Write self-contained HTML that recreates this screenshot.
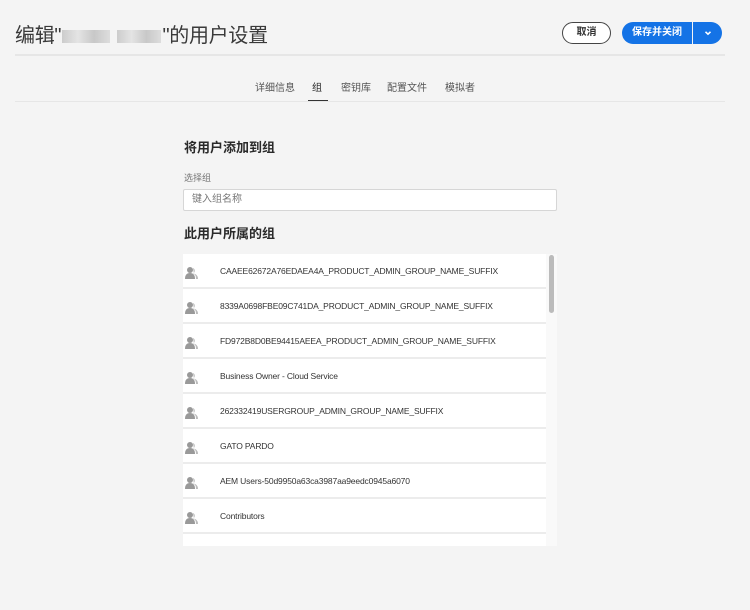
<!DOCTYPE html>
<html><head><meta charset="utf-8"><style>
*{margin:0;padding:0;box-sizing:border-box}
body{width:750px;height:610px;background:#f4f4f4;font-family:"Liberation Sans","Noto Sans CJK SC",sans-serif;position:relative;overflow:hidden;color:#2c2c2c}
.abs{position:absolute}
.title{left:15px;top:19px;font-size:20px;color:#3a3a3a;white-space:nowrap;letter-spacing:-0.3px}
.blur{display:inline-block;height:13px;vertical-align:middle;background:linear-gradient(90deg,#ccc,#e4e4e4,#c8c8c8,#ddd);margin:0 1px}
.hr{left:15px;width:710px;height:2px;background:#e6e6e6}
.btn{top:22px;height:22px;border-radius:11px;font-size:10px;font-weight:bold;text-align:center;line-height:20px}
.tabs span{position:absolute;top:79px;font-size:10px;color:#555}
.row{position:absolute;left:183px;width:363px;height:35px;background:#fff;border-bottom:2px solid #ececec;font-size:8.5px;color:#333;line-height:35px;padding-left:37px;letter-spacing:-0.15px}
.ic{position:absolute;left:2px;top:12px}
</style></head><body>
<div class="abs title">编辑"<span class="blur" style="width:48px"></span> <span class="blur" style="width:44px"></span>"的用户设置</div>
<div class="abs btn" style="left:562px;width:49px;border:1.5px solid #444;color:#333;background:#fff">取消</div>
<div class="abs btn" style="left:622px;width:70px;background:#1473e6;color:#fff;border-radius:11px 0 0 11px;line-height:22px">保存并关闭</div>
<div class="abs btn" style="left:693px;width:29px;background:#1473e6;color:#fff;border-radius:0 11px 11px 0;line-height:20px">
<svg width="10" height="10" viewBox="0 0 10 10" style="margin-top:6px"><path d="M2.5 3.8 L5 6.2 L7.5 3.8" stroke="#fff" stroke-width="1.6" fill="none"/></svg></div>
<div class="abs hr" style="top:54px"></div>
<div class="tabs">
<span style="left:255px">详细信息</span>
<span style="left:312px;color:#222">组</span>
<span style="left:341px">密钥库</span>
<span style="left:387px">配置文件</span>
<span style="left:445px">模拟者</span>
</div>
<div class="abs" style="left:308px;top:100px;width:20px;height:2px;background:#333"></div>
<div class="abs hr" style="top:101px;height:1px"></div>
<div class="abs" style="left:184px;top:137px;font-size:13px;font-weight:bold;color:#2a2a2a">将用户添加到组</div>
<div class="abs" style="left:184px;top:171px;font-size:9px;color:#777">选择组</div>
<div class="abs" style="left:183px;top:189px;width:374px;height:22px;background:#fff;border:1px solid #d6d6d6;border-radius:2px;font-size:10px;color:#777;padding-left:8px;line-height:20px">键入组名称</div>
<div class="abs" style="left:184px;top:223px;font-size:13px;font-weight:bold;color:#2a2a2a">此用户所属的组</div>
<div class="abs" style="left:183px;top:254px;width:374px;height:292px;background:#fff;overflow:hidden"></div>
<div class="abs" style="left:546px;top:254px;width:11px;height:292px;background:#f9f9f9"></div>
<div class="abs" style="left:549px;top:255px;width:5px;height:58px;background:#bbb;border-radius:3px"></div>
<div class="row" style="top:254px"><svg class="ic" width="13" height="13" viewBox="0 0 13 13"><circle cx="5" cy="4" r="3" fill="#999"/><path d="M0 13 Q0 7 5 7 Q10 7 10 13Z" fill="#999"/><path d="M8 2 A3 3 0 0 1 8 7.5 Q13 8 13 13 L11 13 Q11 9 9 8" fill="#bbb"/></svg>CAAEE62672A76EDAEA4A_PRODUCT_ADMIN_GROUP_NAME_SUFFIX</div>
<div class="row" style="top:289px"><svg class="ic" width="13" height="13" viewBox="0 0 13 13"><circle cx="5" cy="4" r="3" fill="#999"/><path d="M0 13 Q0 7 5 7 Q10 7 10 13Z" fill="#999"/><path d="M8 2 A3 3 0 0 1 8 7.5 Q13 8 13 13 L11 13 Q11 9 9 8" fill="#bbb"/></svg>8339A0698FBE09C741DA_PRODUCT_ADMIN_GROUP_NAME_SUFFIX</div>
<div class="row" style="top:324px"><svg class="ic" width="13" height="13" viewBox="0 0 13 13"><circle cx="5" cy="4" r="3" fill="#999"/><path d="M0 13 Q0 7 5 7 Q10 7 10 13Z" fill="#999"/><path d="M8 2 A3 3 0 0 1 8 7.5 Q13 8 13 13 L11 13 Q11 9 9 8" fill="#bbb"/></svg>FD972B8D0BE94415AEEA_PRODUCT_ADMIN_GROUP_NAME_SUFFIX</div>
<div class="row" style="top:359px"><svg class="ic" width="13" height="13" viewBox="0 0 13 13"><circle cx="5" cy="4" r="3" fill="#999"/><path d="M0 13 Q0 7 5 7 Q10 7 10 13Z" fill="#999"/><path d="M8 2 A3 3 0 0 1 8 7.5 Q13 8 13 13 L11 13 Q11 9 9 8" fill="#bbb"/></svg>Business Owner - Cloud Service</div>
<div class="row" style="top:394px"><svg class="ic" width="13" height="13" viewBox="0 0 13 13"><circle cx="5" cy="4" r="3" fill="#999"/><path d="M0 13 Q0 7 5 7 Q10 7 10 13Z" fill="#999"/><path d="M8 2 A3 3 0 0 1 8 7.5 Q13 8 13 13 L11 13 Q11 9 9 8" fill="#bbb"/></svg>262332419USERGROUP_ADMIN_GROUP_NAME_SUFFIX</div>
<div class="row" style="top:429px"><svg class="ic" width="13" height="13" viewBox="0 0 13 13"><circle cx="5" cy="4" r="3" fill="#999"/><path d="M0 13 Q0 7 5 7 Q10 7 10 13Z" fill="#999"/><path d="M8 2 A3 3 0 0 1 8 7.5 Q13 8 13 13 L11 13 Q11 9 9 8" fill="#bbb"/></svg>GATO PARDO</div>
<div class="row" style="top:464px"><svg class="ic" width="13" height="13" viewBox="0 0 13 13"><circle cx="5" cy="4" r="3" fill="#999"/><path d="M0 13 Q0 7 5 7 Q10 7 10 13Z" fill="#999"/><path d="M8 2 A3 3 0 0 1 8 7.5 Q13 8 13 13 L11 13 Q11 9 9 8" fill="#bbb"/></svg>AEM Users-50d9950a63ca3987aa9eedc0945a6070</div>
<div class="row" style="top:499px"><svg class="ic" width="13" height="13" viewBox="0 0 13 13"><circle cx="5" cy="4" r="3" fill="#999"/><path d="M0 13 Q0 7 5 7 Q10 7 10 13Z" fill="#999"/><path d="M8 2 A3 3 0 0 1 8 7.5 Q13 8 13 13 L11 13 Q11 9 9 8" fill="#bbb"/></svg>Contributors</div>
</body></html>
